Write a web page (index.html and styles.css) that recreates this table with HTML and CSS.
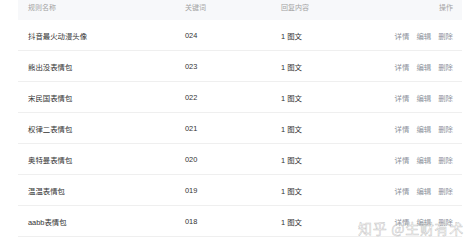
FILE: index.html
```html
<!DOCTYPE html>
<html lang="zh">
<head>
<meta charset="utf-8">
<link rel="stylesheet" href="styles.css">
</head>
<body>
<div class="page">
  <div class="table">
    <div class="row head">
      <div class="c1">规则名称</div>
      <div class="c2">关键词</div>
      <div class="c3">回复内容</div>
      <div class="c4">操作</div>
    </div>
    <div class="row">
      <div class="c1">抖音最火动漫头像</div><div class="c2">024</div><div class="c3">1 图文</div>
      <div class="c4 ops"><span>详情</span><span>编辑</span><span>删除</span></div>
    </div>
    <div class="row">
      <div class="c1">熊出没表情包</div><div class="c2">023</div><div class="c3">1 图文</div>
      <div class="c4 ops"><span>详情</span><span>编辑</span><span>删除</span></div>
    </div>
    <div class="row">
      <div class="c1">宋民国表情包</div><div class="c2">022</div><div class="c3">1 图文</div>
      <div class="c4 ops"><span>详情</span><span>编辑</span><span>删除</span></div>
    </div>
    <div class="row">
      <div class="c1">权律二表情包</div><div class="c2">021</div><div class="c3">1 图文</div>
      <div class="c4 ops"><span>详情</span><span>编辑</span><span>删除</span></div>
    </div>
    <div class="row">
      <div class="c1">奥特曼表情包</div><div class="c2">020</div><div class="c3">1 图文</div>
      <div class="c4 ops"><span>详情</span><span>编辑</span><span>删除</span></div>
    </div>
    <div class="row">
      <div class="c1">温温表情包</div><div class="c2">019</div><div class="c3">1 图文</div>
      <div class="c4 ops"><span>详情</span><span>编辑</span><span>删除</span></div>
    </div>
    <div class="row">
      <div class="c1">aabb表情包</div><div class="c2">018</div><div class="c3">1 图文</div>
      <div class="c4 ops"><span>详情</span><span>编辑</span><span>删除</span></div>
    </div>
  </div>
  <div class="watermark">知乎 @生财有术</div>
</div>
</body>
</html>
```
FILE: styles.css
```css
html, body {
  margin: 0;
  padding: 0;
  background: #ffffff;
}
.page {
  position: relative;
  width: 474px;
  height: 249px;
  overflow: hidden;
  font-family: "Liberation Sans", "Noto Sans CJK SC", sans-serif;
}
.table {
  margin-left: 18px;
  width: 444px;
}
.row {
  display: grid;
  grid-template-columns: 157px 96px 1fr auto;
  align-items: center;
  height: 30px;
  padding: 0 9px 0 10px;
  border-bottom: 1px solid #efefef;
  font-size: 7.4px;
  color: #333333;
}
.row.head {
  height: 14px;
  padding-bottom: 6px;
  background: #f7f8fa;
  border-bottom: none;
  color: #a3a3a3;
  font-size: 7px;
}
.ops {
  display: flex;
  gap: 7px;
  color: #8e939c;
}
.watermark {
  position: absolute;
  left: 358px;
  top: 219px;
  font-size: 14px;
  letter-spacing: 0.7px;
  color: rgba(255, 255, 255, 0.6);
  -webkit-text-stroke: 0.5px rgba(165, 165, 165, 0.65);
  font-family: "Noto Sans CJK SC", sans-serif;
  line-height: 18px;
}
```
